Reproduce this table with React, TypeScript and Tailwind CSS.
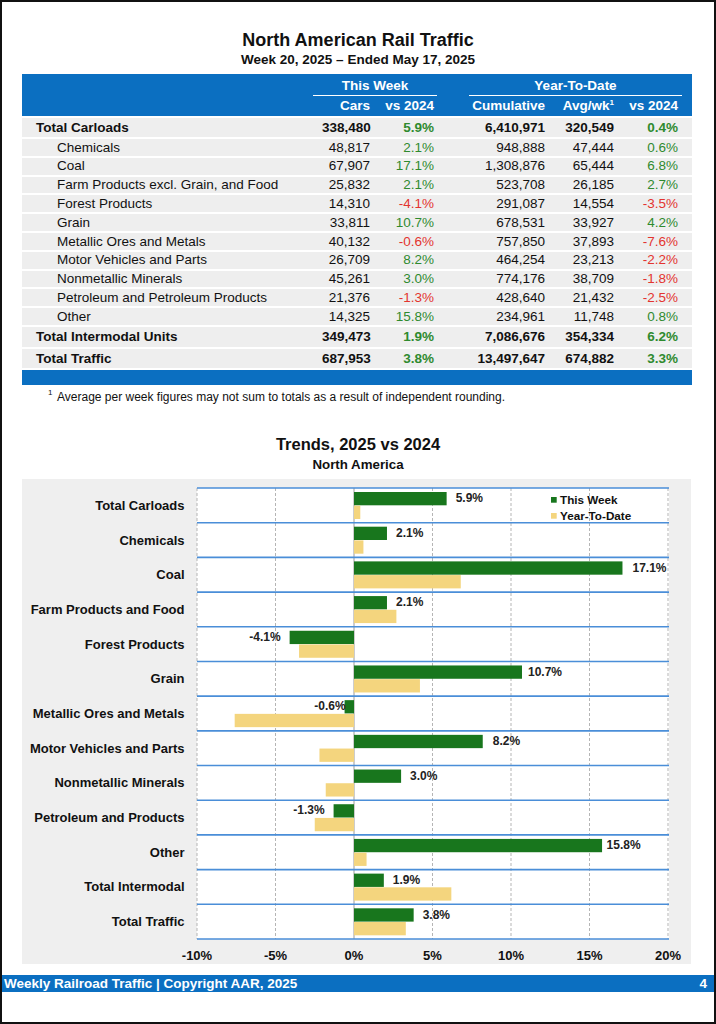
import React from "react";

type Row = {
  label: string;
  cars: string;
  wk: string;
  cum: string;
  avg: string;
  ytd: string;
  kind: "total" | "sub";
};

const rows: Row[] = [
  { label: "Total Carloads", cars: "338,480", wk: "5.9%", cum: "6,410,971", avg: "320,549", ytd: "0.4%", kind: "total" },
  { label: "Chemicals", cars: "48,817", wk: "2.1%", cum: "948,888", avg: "47,444", ytd: "0.6%", kind: "sub" },
  { label: "Coal", cars: "67,907", wk: "17.1%", cum: "1,308,876", avg: "65,444", ytd: "6.8%", kind: "sub" },
  { label: "Farm Products excl. Grain, and Food", cars: "25,832", wk: "2.1%", cum: "523,708", avg: "26,185", ytd: "2.7%", kind: "sub" },
  { label: "Forest Products", cars: "14,310", wk: "-4.1%", cum: "291,087", avg: "14,554", ytd: "-3.5%", kind: "sub" },
  { label: "Grain", cars: "33,811", wk: "10.7%", cum: "678,531", avg: "33,927", ytd: "4.2%", kind: "sub" },
  { label: "Metallic Ores and Metals", cars: "40,132", wk: "-0.6%", cum: "757,850", avg: "37,893", ytd: "-7.6%", kind: "sub" },
  { label: "Motor Vehicles and Parts", cars: "26,709", wk: "8.2%", cum: "464,254", avg: "23,213", ytd: "-2.2%", kind: "sub" },
  { label: "Nonmetallic Minerals", cars: "45,261", wk: "3.0%", cum: "774,176", avg: "38,709", ytd: "-1.8%", kind: "sub" },
  { label: "Petroleum and Petroleum Products", cars: "21,376", wk: "-1.3%", cum: "428,640", avg: "21,432", ytd: "-2.5%", kind: "sub" },
  { label: "Other", cars: "14,325", wk: "15.8%", cum: "234,961", avg: "11,748", ytd: "0.8%", kind: "sub" },
  { label: "Total Intermodal Units", cars: "349,473", wk: "1.9%", cum: "7,086,676", avg: "354,334", ytd: "6.2%", kind: "total" },
  { label: "Total Traffic", cars: "687,953", wk: "3.8%", cum: "13,497,647", avg: "674,882", ytd: "3.3%", kind: "total" },
];

const pct = (v: string) => (v.startsWith("-") ? "text-[#e3342f]" : "text-[#2e8a2e]");

function TableRow({ r, i }: { r: Row; i: number }) {
  const bold = r.kind === "total";
  const h = i === 0 ? "h-[19px]" : i === 11 ? "h-[20px]" : i === 12 ? "h-[19px]" : "h-[16.8px]";
  return (
    <div className={`flex items-center bg-[#eeeeee] ${h} ${bold ? "font-bold" : ""} text-[13.5px] leading-none text-[#111]`}>
      <div className={`w-[300px] ${bold ? "pl-[14px]" : "pl-[35px]"} whitespace-nowrap`}>{r.label}</div>
      <div className="w-[48px] text-right">{r.cars}</div>
      <div className={`w-[64px] text-right ${pct(r.wk)}`}>{r.wk}</div>
      <div className="w-[111px] text-right">{r.cum}</div>
      <div className="w-[69px] text-right">{r.avg}</div>
      <div className={`w-[64px] text-right ${pct(r.ytd)}`}>{r.ytd}</div>
    </div>
  );
}

type Bar = { label: string; wk: number; ytd: number; gap?: number };
const bars: Bar[] = [
  { label: "Total Carloads", wk: 5.9, ytd: 0.4 },
  { label: "Chemicals", wk: 2.1, ytd: 0.6 },
  { label: "Coal", wk: 17.1, ytd: 6.8, gap: 10 },
  { label: "Farm Products and Food", wk: 2.1, ytd: 2.7 },
  { label: "Forest Products", wk: -4.1, ytd: -3.5 },
  { label: "Grain", wk: 10.7, ytd: 4.2, gap: 6 },
  { label: "Metallic Ores and Metals", wk: -0.6, ytd: -7.6, gap: -1 },
  { label: "Motor Vehicles and Parts", wk: 8.2, ytd: -2.2, gap: 10 },
  { label: "Nonmetallic Minerals", wk: 3.0, ytd: -1.8 },
  { label: "Petroleum and Products", wk: -1.3, ytd: -2.5 },
  { label: "Other", wk: 15.8, ytd: 0.8, gap: 4.5 },
  { label: "Total Intermodal", wk: 1.9, ytd: 6.2 },
  { label: "Total Traffic", wk: 3.8, ytd: 3.3 },
];

function Chart() {
  const W = 669;
  const H = 485;
  const X0 = 332;
  const PX = 15.7;
  const PL = 175;
  const PR = 647;
  const PT = 9;
  const PB = 460;
  const RH = (PB - PT) / 13;
  const ticks = [-10, -5, 0, 5, 10, 15, 20];
  const font = "'Liberation Sans', Arial, sans-serif";
  return (
    <svg width={W} height={H} viewBox={`0 0 ${W} ${H}`} className="block">
      <rect x={PL} y={PT} width={PR - PL} height={PB - PT} fill="#ffffff" />
      {ticks.map((t) =>
        t === 0 ? null : (
          <line key={t} x1={X0 + t * PX} x2={X0 + t * PX} y1={PT} y2={PB} stroke="#b5b5b5" strokeWidth={1} strokeDasharray="3 2" />
        )
      )}
      <line x1={X0} x2={X0} y1={PT} y2={PB} stroke="#9a9a9a" strokeWidth={1} />
      {bars.map((b, i) => {
        const top = PT + i * RH;
        const gx = b.wk >= 0 ? X0 : X0 + b.wk * PX;
        const yx = b.ytd >= 0 ? X0 : X0 + b.ytd * PX;
        const gap = b.gap ?? 9;
        const end = X0 + b.wk * PX;
        return (
          <g key={b.label}>
            <rect x={gx} y={top + 4} width={Math.abs(b.wk) * PX} height={13.3} fill="#18761d" />
            <rect x={yx} y={top + 17.7} width={Math.abs(b.ytd) * PX} height={13.3} fill="#f4d57e" />
            <text
              x={b.wk >= 0 ? end + gap : end - gap}
              y={top + 10.2}
              textAnchor={b.wk >= 0 ? "start" : "end"}
              dominantBaseline="central"
              fontFamily={font}
              fontWeight={700}
              fontSize={12}
              fill="#222"
            >
              {b.wk.toFixed(1)}%
            </text>
            <text
              x={162.5}
              y={top + RH / 2}
              textAnchor="end"
              dominantBaseline="central"
              fontFamily={font}
              fontWeight={700}
              fontSize={13}
              fill="#111"
            >
              {b.label}
            </text>
          </g>
        );
      })}
      {Array.from({ length: 14 }).map((_, i) => (
        <line key={i} x1={PL} x2={PR} y1={PT + i * RH} y2={PT + i * RH} stroke="#4a8ed8" strokeWidth={1.6} />
      ))}
      {ticks.map((t) => (
        <text
          key={t}
          x={X0 + t * PX}
          y={476.7}
          textAnchor="middle"
          dominantBaseline="central"
          fontFamily={font}
          fontWeight={700}
          fontSize={13}
          fill="#111"
        >
          {t}%
        </text>
      ))}
      <rect x={529} y={18} width={5.7} height={5.7} fill="#18761d" />
      <text x={538} y={20.7} dominantBaseline="central" fontFamily={font} fontWeight={700} fontSize={11.7} fill="#111">
        This Week
      </text>
      <rect x={529} y={34} width={5.7} height={5.7} fill="#f4d57e" />
      <text x={538} y={36} dominantBaseline="central" fontFamily={font} fontWeight={700} fontSize={11.7} fill="#111">
        Year-To-Date
      </text>
    </svg>
  );
}

export default function App() {
  return (
    <div className="w-[716px] h-[1024px] bg-white border-2 border-[#111] flex flex-col font-['Liberation_Sans',Arial,sans-serif] text-[#111] overflow-hidden">
      <div className="pt-[27.5px] text-center">
        <div className="text-[18px] leading-[21px] font-bold">North American Rail Traffic</div>
        <div className="mt-[1.5px] text-[13.5px] leading-[16px] font-bold">Week 20, 2025 – Ended May 17, 2025</div>
      </div>

      <div className="mx-[20px] mt-[6px] w-[670px]">
        <div className="h-[42px] bg-[#0b6fc1] text-white font-bold text-[13.5px] leading-none flex flex-col">
          <div className="flex h-[22px]">
            <div className="w-[291px]" />
            <div className="w-[124px] border-b-[1.5px] border-white flex items-center justify-center pt-[2px]">This Week</div>
            <div className="w-[32px]" />
            <div className="w-[213px] border-b-[1.5px] border-white flex items-center justify-center pt-[2px]">Year-To-Date</div>
          </div>
          <div className="flex flex-1 items-center">
            <div className="w-[300px]" />
            <div className="w-[48px] text-right">Cars</div>
            <div className="w-[64px] text-right">vs 2024</div>
            <div className="w-[111px] text-right">Cumulative</div>
            <div className="w-[69px] text-right">
              Avg/wk<span className="text-[8px] relative -top-[5px]">1</span>
            </div>
            <div className="w-[64px] text-right">vs 2024</div>
          </div>
        </div>
        <div className="flex flex-col gap-[2px] mt-[2px]">
          {rows.map((r, i) => (
            <TableRow key={r.label} r={r} i={i} />
          ))}
          <div className="h-[15px] bg-[#0b6fc1]" />
        </div>
        <div className="mt-[5px] flex items-center h-[14px] text-[12px] leading-none">
          <span className="w-[35px] pl-[26px] text-[8px] -top-[4px] relative">1</span>
          <span>Average per week figures may not sum to totals as a result of independent rounding.</span>
        </div>
      </div>

      <div className="mt-[31px] text-center">
        <div className="text-[16.5px] leading-[19px] font-bold">Trends, 2025 vs 2024</div>
        <div className="mt-[3px] text-[13.3px] leading-[15px] font-bold">North America</div>
      </div>

      <div className="mx-[20px] mt-[7px] w-[669px] h-[485px] bg-[#efefef]">
        <Chart />
      </div>

      <div className="mt-[11.5px] -mx-[2px] h-[16.6px] bg-[#0b6fc1] text-white font-bold text-[13.5px] leading-none flex items-center justify-between pl-[4px] pr-[9px]">
        <span>Weekly Railroad Traffic | Copyright AAR, 2025</span>
        <span>4</span>
      </div>
    </div>
  );
}
